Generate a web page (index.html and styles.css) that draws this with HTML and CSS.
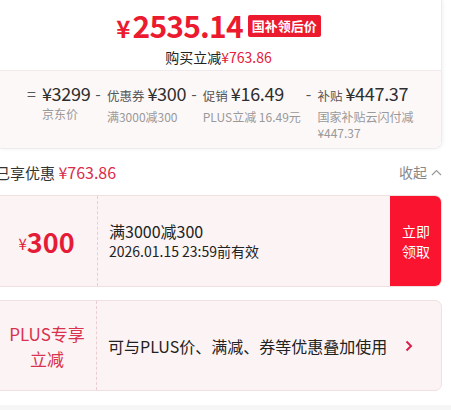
FILE: index.html
```html
<!DOCTYPE html>
<html>
	<head>
		<meta charset="utf-8">
		<title>价格明细</title>
		<link rel="stylesheet" href="styles.css">
	</head>
	<body>
		<div class="page">
			<div class="price-card">
				<div class="price-main">
					<div class="price-line">
						<span class="big-price"><span class="yen">¥</span>2535.14</span>
						<span class="badge">国补领后价</span>
					</div>
					<div class="cut">购买立减<span class="cut-amt">¥763.86</span></div>
				</div>
				<div class="formula">
					<div class="term">
						<span class="op">=</span>
						<div class="term-body">
							<div class="term-top"><span class="amt">¥3299</span></div>
							<div class="term-note">京东价</div>
						</div>
					</div>
					<div class="term">
						<span class="op">-</span>
						<div class="term-body">
							<div class="term-top"><span class="lbl">优惠券</span><span class="amt">¥300</span></div>
							<div class="term-note">满3000减300</div>
						</div>
					</div>
					<div class="term">
						<span class="op">-</span>
						<div class="term-body">
							<div class="term-top"><span class="lbl">促销</span><span class="amt">¥16.49</span></div>
							<div class="term-note">PLUS立减 16.49元</div>
						</div>
					</div>
					<div class="term">
						<span class="op">-</span>
						<div class="term-body last">
							<div class="term-top"><span class="lbl">补贴</span><span class="amt">¥447.37</span></div>
							<div class="term-note wrap">国家补贴云闪付减¥447.37</div>
						</div>
					</div>
				</div>
			</div>

			<div class="section-head">
				<div class="enjoyed">已享优惠 <span class="enjoyed-amt">¥763.86</span></div>
				<div class="fold">收起
					<svg width="11" height="7" viewBox="0 0 11 7"><path d="M1 6 L5.5 1.5 L10 6" fill="none" stroke="#999" stroke-width="1.2"/></svg>
				</div>
			</div>

			<div class="coupon">
				<div class="coupon-left"><span class="c-yen">¥</span><span class="c-val">300</span></div>
				<div class="coupon-mid">
					<div class="c-rule">满3000减300</div>
					<div class="c-date">2026.01.15 23:59前有效</div>
				</div>
				<div class="coupon-btn">立即<br>领取</div>
			</div>

			<div class="coupon plus">
				<div class="coupon-left plus-left">PLUS专享<br>立减</div>
				<div class="coupon-mid plus-mid">可与PLUS价、满减、券等优惠叠加使用</div>
				<div class="plus-arrow">
					<svg width="8" height="12" viewBox="0 0 8 12"><path d="M1.5 1.5 L6 6 L1.5 10.5" fill="none" stroke="#d9204a" stroke-width="2"/></svg>
				</div>
			</div>
		</div>
		<div class="footer-band"></div>
	</body>
</html>
```

FILE: styles.css
```css
html, body {
	margin: 0;
	padding: 0;
	background: #fff;
}
body {
	width: 451px;
	height: 410px;
	overflow: hidden;
	font-family: "Noto Sans CJK SC", "Noto Sans", sans-serif;
	color: #333;
}
.page {
	width: 447px;
	margin-left: -5px;
}
.price-card {
	border: 1px solid #ececec;
	border-top: none;
	border-radius: 0 0 8px 8px;
	box-shadow: 1px 0 4px rgba(0, 0, 0, 0.06);
	overflow: hidden;
}
.price-main {
	height: 71px;
	border-bottom: 1px solid #f1eaea;
	text-align: center;
	padding-top: 8px;
	box-sizing: border-box;
}
.price-line {
	display: flex;
	justify-content: center;
	align-items: center;
	gap: 5px;
	height: 34px;
}
.big-price {
	color: #ec1a2e;
	font-size: 30px;
	font-weight: bold;
	letter-spacing: -0.8px;
}
.yen {
	font-size: 24px;
	margin-right: 3px;
}
.badge {
	background: #ec1a2e;
	color: #fff;
	font-size: 13px;
	font-weight: bold;
	padding: 0 4px;
	height: 22px;
	line-height: 22px;
	border-radius: 2px;
	margin-top: 2px;
}
.cut {
	font-size: 14px;
	line-height: 20px;
	margin-top: 5px;
	color: #222;
}
.cut-amt {
	color: #e4203a;
}
.formula {
	background: #fdf8f8;
	display: flex;
	padding: 10px 0 8px 31px;
	height: 77px;
	box-sizing: border-box;
}
.term {
	display: flex;
	margin-right: 5px;
}
.op {
	font-size: 16px;
	line-height: 24px;
	color: #555;
	margin-right: 6px;
}
.term-top {
	display: flex;
	align-items: baseline;
	gap: 3px;
	line-height: 24px;
	white-space: nowrap;
}
.lbl {
	font-size: 12.5px;
	color: #555;
}
.amt {
	font-size: 18px;
	color: #2e2e2e;
	letter-spacing: -0.3px;
}
.term-note {
	font-size: 12px;
	line-height: 16px;
	color: #999;
	margin-top: 1px;
	white-space: nowrap;
}
.term-note.wrap {
	white-space: normal;
}
.term-body.last {
	width: 100px;
}
.section-head {
	display: flex;
	justify-content: space-between;
	align-items: center;
	height: 46px;
}
.enjoyed {
	font-size: 15px;
	color: #333;
}
.enjoyed-amt {
	color: #d92c48;
	font-size: 16px;
}
.fold {
	font-size: 14px;
	color: #888;
	display: flex;
	align-items: center;
	gap: 4px;
}
.coupon {
	display: flex;
	height: 92px;
	background: #fcf4f4;
	border: 1px solid #f1dfe1;
	border-radius: 0 7px 7px 0;
	box-sizing: border-box;
	overflow: hidden;
}
.coupon-left {
	width: 101px;
	flex: none;
	border-right: 1px dashed #e9cdd1;
	display: flex;
	justify-content: center;
	align-items: center;
	color: #e41c38;
}
.c-yen {
	font-size: 15px;
	margin-top: 4px;
}
.c-val {
	font-size: 27px;
	font-weight: bold;
}
.coupon-mid {
	flex: 1;
	padding-left: 11px;
	display: flex;
	flex-direction: column;
	justify-content: center;
	color: #222;
}
.c-rule {
	font-size: 16px;
	line-height: 21px;
}
.c-date {
	font-size: 14px;
	line-height: 19px;
}
.coupon-btn {
	width: 52px;
	flex: none;
	background: #fb1430;
	color: #fff;
	font-size: 14px;
	line-height: 20px;
	display: flex;
	align-items: center;
	justify-content: center;
	text-align: center;
	margin: -1px -1px -1px 0;
	border-radius: 0 7px 7px 0;
}
.coupon.plus {
	margin-top: 13px;
	height: 91px;
}
.plus-left {
	text-align: center;
	font-size: 17px;
	line-height: 25px;
	color: #d9324f;
	padding-left: 2px;
	box-sizing: border-box;
}
.plus-mid {
	font-size: 16px;
}
.plus-arrow {
	width: 36px;
	display: flex;
	align-items: center;
	justify-content: flex-start;
}
.footer-band {
	margin-top: 14px;
	height: 20px;
	background: #f6f6f6;
}
```
